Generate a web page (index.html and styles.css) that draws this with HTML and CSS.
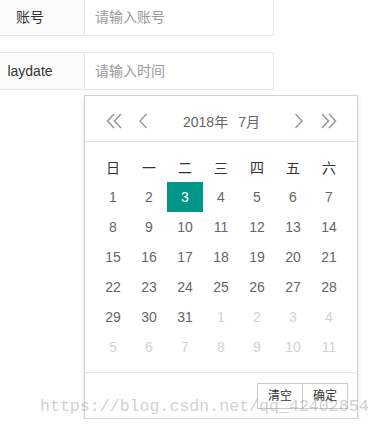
FILE: index.html
```html
<!DOCTYPE html>
<html lang="zh">
<head>
<meta charset="utf-8">
<title>laydate</title>
<link rel="stylesheet" href="styles.css">
</head>
<body>
<form class="form">
  <div class="form-item first">
    <label class="form-label">账号</label>
    <input class="form-input" type="text" placeholder="请输入账号">
  </div>
  <div class="form-item">
    <label class="form-label">laydate</label>
    <input class="form-input" type="text" placeholder="请输入时间">
  </div>
  <div class="laydate">
    <div class="ld-header">
      <span class="ld-icon ld-dbl"><svg width="16" height="16" viewBox="0 0 16 16"><polyline points="8,1 1.5,8 8,15" fill="none" stroke="#999" stroke-width="1.6"/><polyline points="15,1 8.5,8 15,15" fill="none" stroke="#999" stroke-width="1.6"/></svg></span>
      <span class="ld-icon ld-sgl"><svg width="8" height="16" viewBox="0 0 8 16"><polyline points="7.5,1 1,8 7.5,15" fill="none" stroke="#999" stroke-width="1.4"/></svg></span>
      <span class="ld-title"><span>2018年</span><span>7月</span></span>
      <span class="ld-icon ld-sgl"><svg width="8" height="16" viewBox="0 0 8 16"><polyline points="0.5,1 7,8 0.5,15" fill="none" stroke="#999" stroke-width="1.4"/></svg></span>
      <span class="ld-icon ld-dbl"><svg width="16" height="16" viewBox="0 0 16 16"><polyline points="1,1 7.5,8 1,15" fill="none" stroke="#999" stroke-width="1.6"/><polyline points="8,1 14.5,8 8,15" fill="none" stroke="#999" stroke-width="1.6"/></svg></span>
    </div>
    <div class="ld-content">
      <div class="ld-grid">
        <span class="wk">日</span><span class="wk">一</span><span class="wk">二</span><span class="wk">三</span><span class="wk">四</span><span class="wk">五</span><span class="wk">六</span>
        <span>1</span><span>2</span><span class="sel">3</span><span>4</span><span>5</span><span>6</span><span>7</span>
        <span>8</span><span>9</span><span>10</span><span>11</span><span>12</span><span>13</span><span>14</span>
        <span>15</span><span>16</span><span>17</span><span>18</span><span>19</span><span>20</span><span>21</span>
        <span>22</span><span>23</span><span>24</span><span>25</span><span>26</span><span>27</span><span>28</span>
        <span>29</span><span>30</span><span>31</span><span class="other">1</span><span class="other">2</span><span class="other">3</span><span class="other">4</span>
        <span class="other">5</span><span class="other">6</span><span class="other">7</span><span class="other">8</span><span class="other">9</span><span class="other">10</span><span class="other">11</span>
      </div>
    </div>
    <div class="ld-footer">
      <span class="ld-btn">清空</span><span class="ld-btn">确定</span>
    </div>
  </div>
</form>
<div class="watermark">https://blog.csdn.net/qq_42402854</div>
</body>
</html>
```
FILE: styles.css
```css
html, body {
  margin: 0;
  padding: 0;
  background: #fff;
}
body {
  font-family: "Liberation Sans", "Noto Sans CJK SC", sans-serif;
  font-size: 14px;
  color: #333;
  overflow: hidden;
}
.form {
  margin: 0;
}
.form-item {
  display: flex;
  height: 38px;
}
.form-item.first {
  margin-top: -2px;
  margin-bottom: 16px;
}
.form-label {
  box-sizing: border-box;
  width: 84px;
  height: 38px;
  padding-right: 24px;
  background: #fbfbfb;
  border-top: 1px solid #e6e6e6;
  border-bottom: 1px solid #e6e6e6;
  text-align: center;
  line-height: 36px;
  color: #333;
}
.form-input {
  box-sizing: border-box;
  width: 190px;
  height: 38px;
  margin: 0;
  padding: 0 0 0 10px;
  border: 1px solid #e6e6e6;
  border-radius: 0 2px 2px 0;
  font-family: "Liberation Sans", "Noto Sans CJK SC", sans-serif;
  font-size: 14px;
  color: #333;
  outline: none;
}
.form-input::placeholder {
  color: #999;
}
.laydate {
  margin-left: 84px;
  margin-top: 5px;
  width: 272px;
  border: 1px solid #d2d2d2;
  background: #fff;
  box-shadow: 0 2px 4px rgba(0, 0, 0, .12);
}
.ld-header {
  display: flex;
  align-items: center;
  height: 30px;
  padding: 10px 20px 5px 21px;
  border-bottom: 1px solid #e2e2e2;
}
.ld-icon {
  display: flex;
  align-items: center;
}
.ld-dbl + .ld-sgl {
  margin-left: 17px;
}
.ld-sgl + .ld-dbl {
  margin-left: 18px;
}
.ld-title {
  flex: 1;
  display: flex;
  justify-content: center;
  color: #666;
  font-size: 14px;
  padding-left: 1px;
}
.ld-title span {
  padding: 0 5px;
}
.ld-content {
  padding: 10px;
}
.ld-grid {
  display: grid;
  grid-template-columns: repeat(7, 36px);
  grid-auto-rows: 30px;
}
.ld-grid span {
  display: flex;
  align-items: center;
  justify-content: center;
  color: #666;
  font-size: 14px;
}
.ld-grid span.wk {
  color: #333;
}
.ld-grid span.sel {
  background: #009688;
  color: #fff;
}
.ld-grid span.other {
  color: #d2d2d2;
}
.ld-footer {
  display: flex;
  justify-content: flex-end;
  padding: 10px 9px 9px;
  border-top: 1px solid #e2e2e2;
}
.ld-btn {
  box-sizing: border-box;
  height: 26px;
  line-height: 24px;
  padding: 0 10px;
  border: 1px solid #c9c9c9;
  background: #fff;
  font-size: 12px;
  color: #333;
}
.ld-btn + .ld-btn {
  margin-left: -1px;
}
.watermark {
  position: absolute;
  left: 40px;
  top: 397px;
  font-family: "Liberation Mono", monospace;
  font-size: 16.6px;
  color: rgba(150, 150, 150, 0.45);
  white-space: nowrap;
  pointer-events: none;
}
```
